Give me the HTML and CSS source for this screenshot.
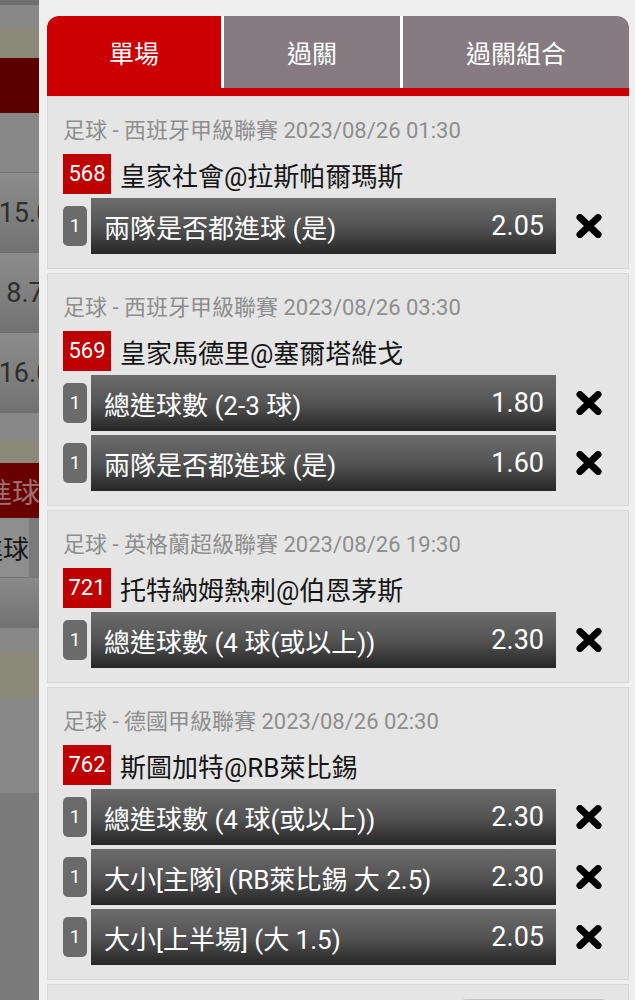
FILE: index.html
```html
<!DOCTYPE html>
<html lang="zh-Hant">
  <head>
    <meta charset="UTF-8" />
    <meta name="viewport" content="width=device-width, initial-scale=1.0" />
    <title>投注單</title>
    <link rel="stylesheet" href="styles.css">
  </head>

  <body>
    <div class="screen">
      <!-- página de fondo atenuada -->
      <aside class="backdrop">
        <div class="bd bd-top"></div>
        <div class="bd bd-grey h23"></div>
        <div class="bd bd-khaki h30"></div>
        <div class="bd bd-red h55"></div>
        <div class="bd bd-grey h60 bd-line"></div>
        <div class="bd bd-odds">15.0</div>
        <div class="bd bd-odds">8.7</div>
        <div class="bd bd-odds">16.0</div>
        <div class="bd bd-grey h27"></div>
        <div class="bd bd-khaki h23"></div>
        <div class="bd bd-red h55 bd-red-text">進球</div>
        <div class="bd bd-light h60 bd-line bd-text">進球</div>
        <div class="bd bd-fade h50"></div>
        <div class="bd bd-grey h24"></div>
        <div class="bd bd-khaki h45"></div>
        <div class="bd bd-grey h96"></div>
      </aside>

      <main class="slip">
        <nav class="tabs">
          <button class="tab active">單場</button>
          <button class="tab">過關</button>
          <button class="tab">過關組合</button>
        </nav>

        <div class="cards">
          <section class="bet-card">
            <div class="league">足球 - 西班牙甲級聯賽 2023/08/26 01:30</div>
            <div class="match">
              <span class="match-no">568</span>
              <span class="match-name">皇家社會@拉斯帕爾瑪斯</span>
            </div>
            <div class="leg">
              <span class="leg-count">1</span>
              <div class="leg-bar"><span>兩隊是否都進球 (是)</span><span>2.05</span></div>
              <button class="leg-remove" aria-label="刪除">
                <svg width="26" height="24" viewBox="0 0 26 24"><path d="M4 3.5 L22 20.5 M22 3.5 L4 20.5" /></svg>
              </button>
            </div>
          </section>

          <section class="bet-card">
            <div class="league">足球 - 西班牙甲級聯賽 2023/08/26 03:30</div>
            <div class="match">
              <span class="match-no">569</span>
              <span class="match-name">皇家馬德里@塞爾塔維戈</span>
            </div>
            <div class="leg">
              <span class="leg-count">1</span>
              <div class="leg-bar"><span>總進球數 (2-3 球)</span><span>1.80</span></div>
              <button class="leg-remove" aria-label="刪除">
                <svg width="26" height="24" viewBox="0 0 26 24"><path d="M4 3.5 L22 20.5 M22 3.5 L4 20.5" /></svg>
              </button>
            </div>
            <div class="leg">
              <span class="leg-count">1</span>
              <div class="leg-bar"><span>兩隊是否都進球 (是)</span><span>1.60</span></div>
              <button class="leg-remove" aria-label="刪除">
                <svg width="26" height="24" viewBox="0 0 26 24"><path d="M4 3.5 L22 20.5 M22 3.5 L4 20.5" /></svg>
              </button>
            </div>
          </section>

          <section class="bet-card">
            <div class="league">足球 - 英格蘭超級聯賽 2023/08/26 19:30</div>
            <div class="match">
              <span class="match-no">721</span>
              <span class="match-name">托特納姆熱刺@伯恩茅斯</span>
            </div>
            <div class="leg">
              <span class="leg-count">1</span>
              <div class="leg-bar"><span>總進球數 (4 球(或以上))</span><span>2.30</span></div>
              <button class="leg-remove" aria-label="刪除">
                <svg width="26" height="24" viewBox="0 0 26 24"><path d="M4 3.5 L22 20.5 M22 3.5 L4 20.5" /></svg>
              </button>
            </div>
          </section>

          <section class="bet-card">
            <div class="league">足球 - 德國甲級聯賽 2023/08/26 02:30</div>
            <div class="match">
              <span class="match-no">762</span>
              <span class="match-name">斯圖加特@RB萊比錫</span>
            </div>
            <div class="leg">
              <span class="leg-count">1</span>
              <div class="leg-bar"><span>總進球數 (4 球(或以上))</span><span>2.30</span></div>
              <button class="leg-remove" aria-label="刪除">
                <svg width="26" height="24" viewBox="0 0 26 24"><path d="M4 3.5 L22 20.5 M22 3.5 L4 20.5" /></svg>
              </button>
            </div>
            <div class="leg">
              <span class="leg-count">1</span>
              <div class="leg-bar"><span>大小[主隊] (RB萊比錫 大 2.5)</span><span>2.30</span></div>
              <button class="leg-remove" aria-label="刪除">
                <svg width="26" height="24" viewBox="0 0 26 24"><path d="M4 3.5 L22 20.5 M22 3.5 L4 20.5" /></svg>
              </button>
            </div>
            <div class="leg">
              <span class="leg-count">1</span>
              <div class="leg-bar"><span>大小[上半場] (大 1.5)</span><span>2.05</span></div>
              <button class="leg-remove" aria-label="刪除">
                <svg width="26" height="24" viewBox="0 0 26 24"><path d="M4 3.5 L22 20.5 M22 3.5 L4 20.5" /></svg>
              </button>
            </div>
          </section>

          <section class="bet-card footer-card">
            <button class="clear-btn"></button>
          </section>
        </div>
      </main>
    </div>
  </body>
</html>
```

FILE: styles.css
```css
body {
  margin: 0;
  font-family: Roboto, "Noto Sans CJK TC", sans-serif;
  background-color: #efefef;
}

.screen {
  display: flex;
  height: 1000px;
  overflow: hidden;
}

/* Página de fondo */
.backdrop {
  width: 39px;
  flex: none;
  overflow: hidden;
  background-color: #7a7a7a;
}

.bd {
  width: 48px;
  box-sizing: border-box;
  display: flex;
  align-items: center;
  justify-content: flex-end;
  white-space: nowrap;
}

.bd-top { height: 5px; background-color: #6f6f6f; }
.bd-grey { background-color: #888; }
.bd-khaki { background-color: #8b8979; }
.bd-red { background-color: #5c0000; }
.bd-light { background-color: #8e8e8e; }
.bd-fade { background: linear-gradient(#8a8a8a, #727272); }
.bd-line { border-bottom: 1px solid #737373; }

.h23 { height: 23px; }
.h24 { height: 24px; }
.h27 { height: 27px; }
.h30 { height: 30px; }
.h45 { height: 45px; }
.h50 { height: 50px; }
.h55 { height: 55px; }
.h60 { height: 60px; }
.h96 { height: 96px; }

.bd-odds {
  width: 50px;
  height: 80px;
  justify-content: center;
  font-size: 27px;
  color: #2e2e2e;
  background: linear-gradient(#8c8c8c, #7b7b7b 70%, #707070);
}

.bd-red-text {
  width: 40px;
  font-size: 28px;
  color: #9c7070;
  background-color: #680000;
}

.bd-text {
  width: 29px;
  font-size: 26px;
  color: #161616;
}

/* Panel del boleto */
.slip {
  flex: 1;
  padding: 16px 6px 0 8px;
  background-color: #efefef;
}

.tabs {
  display: grid;
  grid-template-columns: 174px 176px 1fr;
  gap: 3px;
  background-color: #fff;
  border-bottom: 8px solid #cc0000;
  border-radius: 12px 12px 0 0;
  overflow: hidden;
}

.tab {
  height: 72px;
  border: none;
  padding: 0;
  background-color: #857b80;
  color: #fff;
  font-family: inherit;
  font-size: 25px;
  cursor: pointer;
}

.tab.active {
  background-color: #cc0000;
}

.cards {
  display: flex;
  flex-direction: column;
  gap: 4px;
}

.bet-card {
  background-color: #e5e5e5;
  border: 1px solid #d8d8d8;
  padding: 21px 6px 14px 15px;
}

.league {
  font-size: 22px;
  line-height: 26px;
  color: #8e8e8e;
  margin-bottom: 10px;
  white-space: nowrap;
}

.match {
  display: flex;
  align-items: center;
  gap: 9px;
  height: 40px;
}

.match-no {
  width: 48px;
  height: 40px;
  line-height: 40px;
  text-align: center;
  background-color: #bf0000;
  color: #fff;
  font-size: 22px;
}

.match-name {
  font-size: 26px;
  color: #151515;
  white-space: nowrap;
}

.leg {
  display: flex;
  align-items: center;
  height: 56px;
  margin-top: 4px;
}

.leg-count {
  width: 24px;
  height: 40px;
  line-height: 40px;
  text-align: center;
  margin-right: 4px;
  border-radius: 5px;
  background-color: #6b6b6b;
  color: #fff;
  font-size: 19px;
}

.leg-bar {
  flex: 1;
  height: 56px;
  display: flex;
  align-items: center;
  justify-content: space-between;
  padding: 0 12px 0 13px;
  box-sizing: border-box;
  background: linear-gradient(#6c6c6c, #545454 50%, #262626);
  color: #fff;
  font-size: 26px;
  white-space: nowrap;
}

.leg-bar span:last-child {
  font-size: 27px;
}

.leg-remove {
  width: 66px;
  height: 56px;
  display: flex;
  align-items: center;
  justify-content: center;
  border: none;
  padding: 0;
  background: none;
  cursor: pointer;
}

.leg-remove path {
  stroke: #000;
  stroke-width: 7;
  stroke-linecap: round;
  fill: none;
}

.footer-card {
  display: flex;
  justify-content: flex-end;
  padding: 14px 18px 14px 15px;
}

.clear-btn {
  width: 152px;
  height: 44px;
  border: 1px solid #c4c4c4;
  border-radius: 8px;
  background-color: #f5f5f5;
}
```
